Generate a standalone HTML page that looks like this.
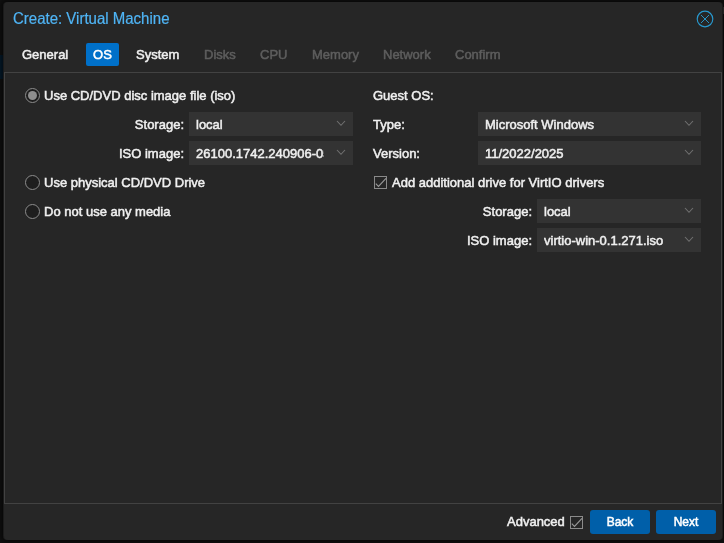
<!DOCTYPE html>
<html><head><meta charset="utf-8">
<style>
html,body{margin:0;padding:0;}
body{width:724px;height:543px;background:#101010;overflow:hidden;position:relative;font-family:"Liberation Sans",Arial,sans-serif;font-size:13px;color:#f0f0f0;}
#root{position:absolute;left:0;top:0;width:724px;height:543px;will-change:transform;transform:translateZ(0);}
.abs{position:absolute;}
#winsh{left:3px;top:2px;width:720px;height:538px;background:#1b1b1b;border-radius:4px;box-shadow:0 0 5px 2px rgba(0,0,0,.55);}
#win{left:4px;top:2px;width:718px;height:538px;background:#262626;border-radius:4px;}
#title{left:13px;top:10px;font-size:15px;color:#4fb4f5;line-height:18px;white-space:nowrap;-webkit-text-stroke:0.2px currentColor;transform:scaleY(1.04);transform-origin:0 75%;}
.t{-webkit-text-stroke:0.5px currentColor;transform:scaleY(1.05);transform-origin:0 72%;}
.ib{display:inline-block;}
.tab{top:43px;height:23px;line-height:23px;white-space:nowrap;color:#f0f0f0;}
.tab.dis{color:#5e5e5e;}
.tab.act{background:#0070c9;border-radius:2px;color:#fff;}
#body{left:4px;top:72px;width:716px;height:430px;border:1px solid #424242;background:#262626;}
.lbl{white-space:nowrap;line-height:16px;}
.fld{background:#333;height:24px;line-height:25px;white-space:nowrap;overflow:hidden;}
.fld span{display:block;margin-left:7px;overflow:hidden;}
.radio{width:15px;height:15px;border:1px solid #8c8c8c;border-radius:50%;box-sizing:border-box;background:#1e1e1e;left:25px;}
.btn{background:#005fa9;border-radius:3px;height:24px;line-height:24px;text-align:center;color:#fff;top:510px;width:60px;font-size:12px;}
svg{position:absolute;overflow:visible;}
</style></head><body><div id="root">
<div class="abs" style="left:0;top:55px;width:3px;height:24px;background:#041a2b"></div>
<div class="abs" style="left:723px;top:7px;width:1px;height:7px;background:#3a3a3a"></div>
<div id="winsh" class="abs"></div>
<div id="win" class="abs"></div>
<div id="title" class="abs">Create: Virtual Machine</div>
<svg style="left:695px;top:9px" width="20" height="20" viewBox="0 0 20 20"><circle cx="10" cy="10" r="7.8" fill="none" stroke="#2899cf" stroke-width="1.15"/><path d="M6 6L14 14M14 6L6 14" stroke="#2899cf" stroke-width="0.95" fill="none"/></svg>

<div class="abs tab t" style="left:22px">General</div>
<div class="abs tab act" style="left:86px;width:33px;text-align:center"><span class="t ib">OS</span></div>
<div class="abs tab t" style="left:136px">System</div>
<div class="abs tab dis t" style="left:204px">Disks</div>
<div class="abs tab dis t" style="left:260px">CPU</div>
<div class="abs tab dis t" style="left:312px">Memory</div>
<div class="abs tab dis t" style="left:383px">Network</div>
<div class="abs tab dis t" style="left:455px">Confirm</div>

<div id="body" class="abs"></div>

<div class="abs radio" style="top:88px;"></div>
<div class="abs" style="left:28px;top:91px;width:9px;height:9px;border-radius:50%;background:#8e8e8e"></div>
<div class="abs lbl t" style="left:44px;top:88px">Use CD/DVD disc image file (iso)</div>

<div class="abs lbl t" style="right:540px;top:117px">Storage:</div>
<div class="abs fld" style="left:189px;top:112px;width:164px"><span class="t">local</span></div>
<div class="abs lbl t" style="right:540px;top:146px">ISO image:</div>
<div class="abs fld" style="left:189px;top:141px;width:164px"><span class="t" style="width:128px">26100.1742.240906-0540</span></div>

<div class="abs radio" style="top:175px;"></div>
<div class="abs lbl t" style="left:44px;top:175px">Use physical CD/DVD Drive</div>
<div class="abs radio" style="top:204px;"></div>
<div class="abs lbl t" style="left:44px;top:204px">Do not use any media</div>

<div class="abs lbl t" style="left:373px;top:88px">Guest OS:</div>
<div class="abs lbl t" style="left:373px;top:117px">Type:</div>
<div class="abs fld" style="left:478px;top:112px;width:223px"><span class="t">Microsoft Windows</span></div>
<div class="abs lbl t" style="left:373px;top:146px">Version:</div>
<div class="abs fld" style="left:478px;top:141px;width:223px"><span class="t">11/2022/2025</span></div>

<svg style="left:374px;top:176px" width="13" height="13" viewBox="0 0 13 13"><rect x=".5" y=".5" width="12" height="12" fill="none" stroke="#8a8a8a" stroke-width="1"/><path d="M1.8 7.6L4.5 10.4L12 2.4" fill="none" stroke="#9a9a9a" stroke-width="1.1"/></svg>
<div class="abs lbl t" style="left:392px;top:175px">Add additional drive for VirtIO drivers</div>

<div class="abs lbl t" style="right:192px;top:204px">Storage:</div>
<div class="abs fld" style="left:537px;top:199px;width:164px"><span class="t">local</span></div>
<div class="abs lbl t" style="right:192px;top:233px">ISO image:</div>
<div class="abs fld" style="left:537px;top:228px;width:164px"><span class="t">virtio-win-0.1.271.iso</span></div>

<!-- chevrons -->
<svg style="left:0;top:0" width="724" height="543" viewBox="0 0 724 543" fill="none" stroke="#707070" stroke-width="1.1">
<path d="M337 121L341 125.3L345 121"/>
<path d="M337 150L341 154.3L345 150"/>
<path d="M685 121L689 125.3L693 121"/>
<path d="M685 150L689 154.3L693 150"/>
<path d="M685 208L689 212.3L693 208"/>
<path d="M685 237L689 241.3L693 237"/>
</svg>

<div class="abs lbl t" style="left:507px;top:514px">Advanced</div>
<svg style="left:570px;top:516px" width="13" height="13" viewBox="0 0 13 13"><rect x=".5" y=".5" width="12" height="12" fill="none" stroke="#8a8a8a" stroke-width="1"/><path d="M1.8 7.6L4.5 10.4L12 2.4" fill="none" stroke="#9a9a9a" stroke-width="1.1"/></svg>
<div class="abs btn" style="left:590px"><span class="t ib">Back</span></div>
<div class="abs btn" style="left:656px"><span class="t ib">Next</span></div>
</div></body></html>
